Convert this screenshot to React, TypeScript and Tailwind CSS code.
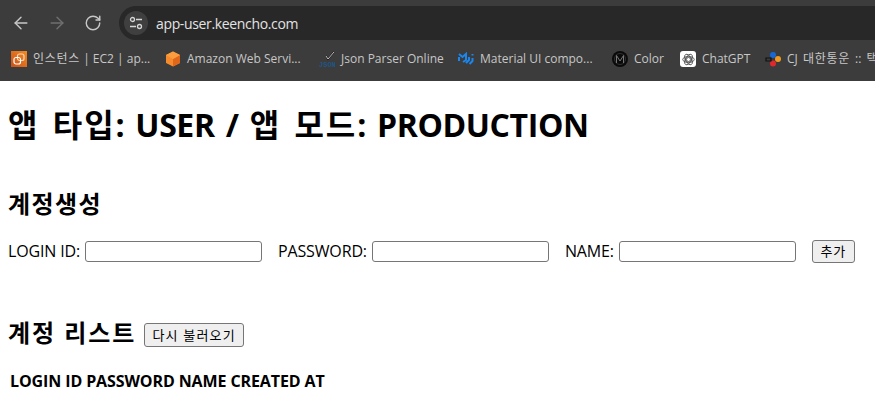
import React from "react";
import { ArrowLeft, ArrowRight, RotateCw } from "lucide-react";

const font = { fontFamily: '"Open Sans", "Noto Sans CJK KR", sans-serif' };

function Ko({ children }: { children: React.ReactNode }) {
  return <span className="tracking-[0.06em]">{children}</span>;
}

function Bookmark({ icon, children, w }: { icon: React.ReactNode; children: React.ReactNode; w: string }) {
  return (
    <div className={`flex items-center gap-[6px] shrink-0 ${w}`}>
      <span className="w-4 h-4 shrink-0 flex items-center justify-center">{icon}</span>
      <span className="text-[12px] leading-4 text-[#c7c7c7] whitespace-nowrap">{children}</span>
    </div>
  );
}

export default function App() {
  return (
    <div className="w-[875px] h-[415px] overflow-hidden bg-white text-black" style={font}>
      <header className="h-[81px] bg-[#3c3c3c]">
        <div className="h-[46px] flex items-center pl-[11px]">
          <ArrowLeft size={20} strokeWidth={1.7} className="text-[#c7c7c7]" />
          <ArrowRight size={20} strokeWidth={1.7} className="text-[#6f6f6f] ml-[16px]" />
          <RotateCw size={18} strokeWidth={1.9} className="text-[#c7c7c7] ml-[17px]" />
          <div className="ml-[17px] flex-1 h-[34px] rounded-l-[17px] bg-[#282828] flex items-center pl-[5px]">
            <span className="w-6 h-6 rounded-full bg-[#3f3f3f] flex items-center justify-center">
              <svg width="14" height="14" viewBox="0 0 14 14" fill="none" stroke="#d6d6d6" strokeWidth="1.3">
                <circle cx="3.5" cy="3.5" r="2" />
                <path d="M7 3.5h6M1 10.5h6" />
                <circle cx="10.5" cy="10.5" r="2" />
              </svg>
            </span>
            <span className="ml-[8px] text-[14px] tracking-[-0.35px] text-[#e3e3e3]">app-user.keencho.com</span>
          </div>
        </div>
        <div className="h-[35px] flex items-start pt-[5px] pl-[11px] overflow-hidden">
          <Bookmark
            w="w-[154px]"
            icon={
              <svg width="16" height="16" viewBox="0 0 16 16">
                <defs>
                  <linearGradient id="ec2" x1="0" y1="1" x2="1" y2="0">
                    <stop offset="0" stopColor="#c8511b" />
                    <stop offset="1" stopColor="#f58a1f" />
                  </linearGradient>
                </defs>
                <rect width="16" height="16" fill="url(#ec2)" />
                <rect x="6.5" y="3" width="6.5" height="6.5" rx="2" fill="none" stroke="#f7d9bd" strokeWidth="1.2" />
                <rect x="3" y="6.5" width="6.5" height="6.5" rx="2" fill="none" stroke="#fff" strokeWidth="1.2" />
              </svg>
            }
          >
            <Ko>인스턴스</Ko> | EC2 | ap...
          </Bookmark>
          <Bookmark
            w="w-[154px]"
            icon={
              <svg width="16" height="16" viewBox="0 0 16 16">
                <path d="M8 0.5 15 4v8l-7 3.5L1 12V4z" fill="#f58b2c" />
                <path d="M8 8 15 4v8l-7 3.5z" fill="#e0661a" />
                <path d="M8 0.5 15 4 8 8 1 4z" fill="#fb9d3f" />
              </svg>
            }
          >
            Amazon Web Servi...
          </Bookmark>
          <Bookmark
            w="w-[139px]"
            icon={
              <span className="relative w-4 h-4 block">
                <svg width="16" height="16" viewBox="0 0 16 16" fill="none" className="absolute left-0 top-0">
                  <path d="M7 5l2 3 6-7" stroke="#101010" strokeWidth="1.6" />
                  <path d="M7 5l2 3 6-7" stroke="#d8d8d8" strokeWidth="0.9" />
                </svg>
                <span className="absolute left-0 bottom-[-2px] w-4 text-center text-[7px] font-bold leading-[8px] text-[#1f5585]" style={{ fontFamily: '"Liberation Mono", monospace' }}>
                  JSON
                </span>
              </span>
            }
          >
            Json Parser Online
          </Bookmark>
          <Bookmark
            w="w-[154px]"
            icon={
              <svg width="16" height="16" viewBox="0 0 16 16" fill="none" stroke="#1a86f0" strokeWidth="2">
                <path d="M1 3l3.5 3L8 3v6l-3 2" />
                <path d="M1 6v4" />
                <path d="M11 6v3l-3 3" />
                <path d="M14.5 3v1.5" />
                <path d="M14.5 7v3l-3 3" />
              </svg>
            }
          >
            Material UI compo...
          </Bookmark>
          <Bookmark
            w="w-[68px]"
            icon={
              <svg width="16" height="16" viewBox="0 0 16 16" fill="none">
                <circle cx="8" cy="8" r="8" fill="#0a0a0a" />
                <circle cx="8" cy="8" r="5.5" stroke="#3a3a3a" strokeWidth="0.8" />
                <path d="M4.5 12V4.5L8 10l3.5-5.5V12" stroke="#777" strokeWidth="1" />
              </svg>
            }
          >
            Color
          </Bookmark>
          <Bookmark
            w="w-[85px]"
            icon={
              <span className="w-4 h-4 rounded-[3px] bg-white flex items-center justify-center">
                <svg width="13" height="13" viewBox="0 0 14 14" fill="none" stroke="#444" strokeWidth="0.9">
                  <circle cx="7" cy="7" r="2.2" />
                  <ellipse cx="7" cy="7" rx="6.2" ry="3.2" />
                  <ellipse cx="7" cy="7" rx="6.2" ry="3.2" transform="rotate(60 7 7)" />
                  <ellipse cx="7" cy="7" rx="6.2" ry="3.2" transform="rotate(120 7 7)" />
                </svg>
              </span>
            }
          >
            ChatGPT
          </Bookmark>
          <Bookmark
            w="w-[120px]"
            icon={
              <svg width="16" height="16" viewBox="0 0 16 16">
                <circle cx="8" cy="4" r="3" fill="#1668d8" />
                <circle cx="13" cy="8" r="3" fill="#f29a1f" />
                <circle cx="8" cy="12.5" r="3" fill="#e2282c" />
                <path d="M1 7h5v3H1z" fill="none" stroke="#111" strokeWidth="1.2" />
              </svg>
            }
          >
            <span className="[word-spacing:2px]">
              CJ <Ko>대한통운</Ko> :: <Ko>택배</Ko>
            </span>
          </Bookmark>
        </div>
      </header>
      <main className="px-2 leading-normal">
        <h1 className="text-[32px] font-bold leading-[43px] mt-[22px] mb-[42px] tracking-[-0.0125em] [word-spacing:0.1em]">
          <Ko>앱 타입</Ko>: USER / <Ko>앱 모드</Ko>: PRODUCTION
        </h1>
        <h2 className="text-[24px] font-bold leading-8 mb-[20px]">
          <Ko>계정생성</Ko>
        </h2>
        <form className="flex items-center text-[16px] leading-[21px] whitespace-nowrap tracking-[-0.15px]">
          <label className="flex items-center mr-4">
            LOGIN ID:
            <input className="ml-[5px] w-[177px] h-[21px] border border-[#767676] rounded-[3px] bg-white" />
          </label>
          <label className="flex items-center mr-4">
            PASSWORD:
            <input className="ml-[5px] w-[177px] h-[21px] border border-[#767676] rounded-[3px] bg-white" />
          </label>
          <label className="flex items-center mr-4">
            NAME:
            <input className="ml-[5px] w-[177px] h-[21px] border border-[#767676] rounded-[3px] bg-white" />
          </label>
          <button type="button" className="h-[23px] w-[43px] text-[13px] leading-none border border-[#767676] rounded-[3px] bg-[#efefef]">
            <Ko>추가</Ko>
          </button>
        </form>
        <h2 className="text-[24px] font-bold leading-8 mt-[54px] mb-[19px] flex items-end">
          <span className="tracking-[0.08em]">계정 리스트</span>
          <button type="button" className="ml-[8px] mb-[2px] h-[24px] w-[100px] text-[13px] font-normal leading-none border border-[#767676] rounded-[3px] bg-[#efefef] tracking-[0.09em]">
            다시 불러오기
          </button>
        </h2>
        <table className="border-separate border-spacing-[2px] text-[16px] leading-[21px] tracking-[-0.1px] -ml-px">
          <thead>
            <tr>
              <th className="p-px font-bold">LOGIN ID</th>
              <th className="p-px font-bold">PASSWORD</th>
              <th className="p-px font-bold">NAME</th>
              <th className="p-px font-bold">CREATED AT</th>
            </tr>
          </thead>
        </table>
      </main>
    </div>
  );
}
